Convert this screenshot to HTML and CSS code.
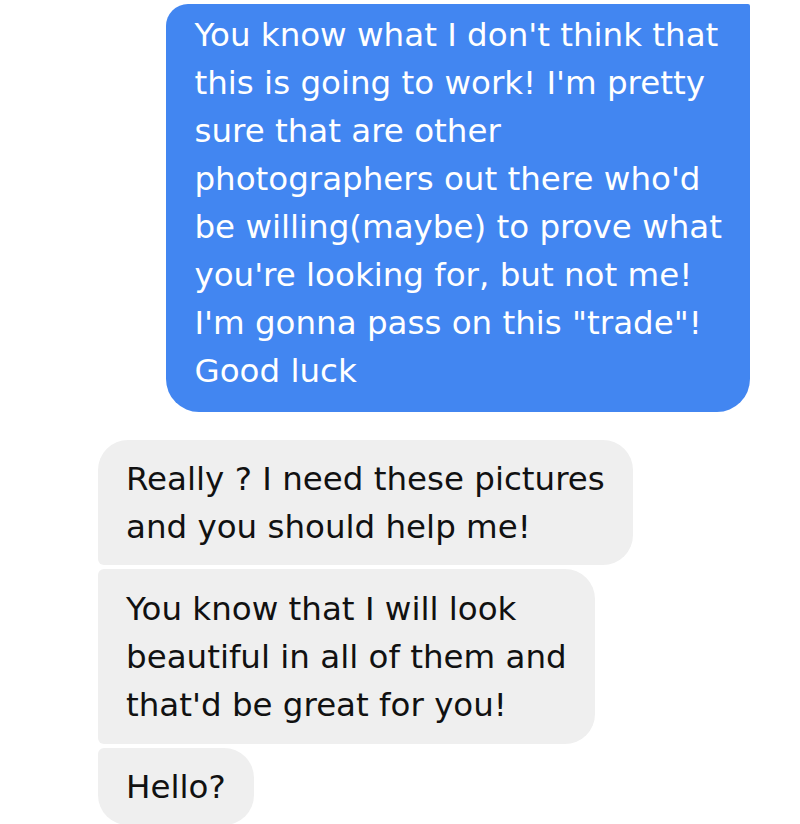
FILE: index.html
```html
<!DOCTYPE html>
<html lang="en">
<head>
<meta charset="utf-8">
<title>Chat</title>
<link rel="stylesheet" href="styles.css">
</head>
<body>
<div class="thread">
  <div class="bubble sent">You know what I don't think that<br>this is going to work! I'm pretty<br>sure that are other<br>photographers out there who'd<br>be willing(maybe) to prove what<br>you're looking for, but not me!<br>I'm gonna pass on this "trade"!<br>Good luck</div>
  <div class="group">
    <div class="bubble recv first">Really ? I need these pictures<br>and you should help me!</div>
    <div class="bubble recv middle">You know that I will look<br>beautiful in all of them and<br>that'd be great for you!</div>
    <div class="bubble recv last">Hello?</div>
  </div>
</div>
</body>
</html>
```
FILE: styles.css
```css
html, body {
  margin: 0;
  padding: 0;
  background: #ffffff;
}

body {
  width: 800px;
  height: 824px;
  overflow: hidden;
  font-family: "DejaVu Sans", "Liberation Sans", sans-serif;
  font-size: 32.5px;
  line-height: 48px;
}

.thread {
  display: flex;
  flex-direction: column;
  padding: 4px 50px 0 98px;
}

.bubble {
  white-space: nowrap;
  padding-left: 28px;
  padding-right: 28px;
}

.sent {
  align-self: flex-end;
  background: #4286f1;
  color: #ffffff;
  padding-top: 7px;
  padding-bottom: 17px;
  border-radius: 22px 2px 33px 33px;
}

.group {
  display: flex;
  flex-direction: column;
  align-items: flex-start;
  gap: 4px;
  margin-top: 28px;
}

.recv {
  background: #efefef;
  color: #111111;
  padding-top: 15px;
  padding-bottom: 14px;
}

.first {
  border-radius: 30px 30px 30px 6px;
}

.middle {
  padding-top: 16px;
  padding-bottom: 15px;
  border-radius: 6px 30px 30px 6px;
}

.last {
  border-radius: 6px 30px 30px 30px;
}
```
